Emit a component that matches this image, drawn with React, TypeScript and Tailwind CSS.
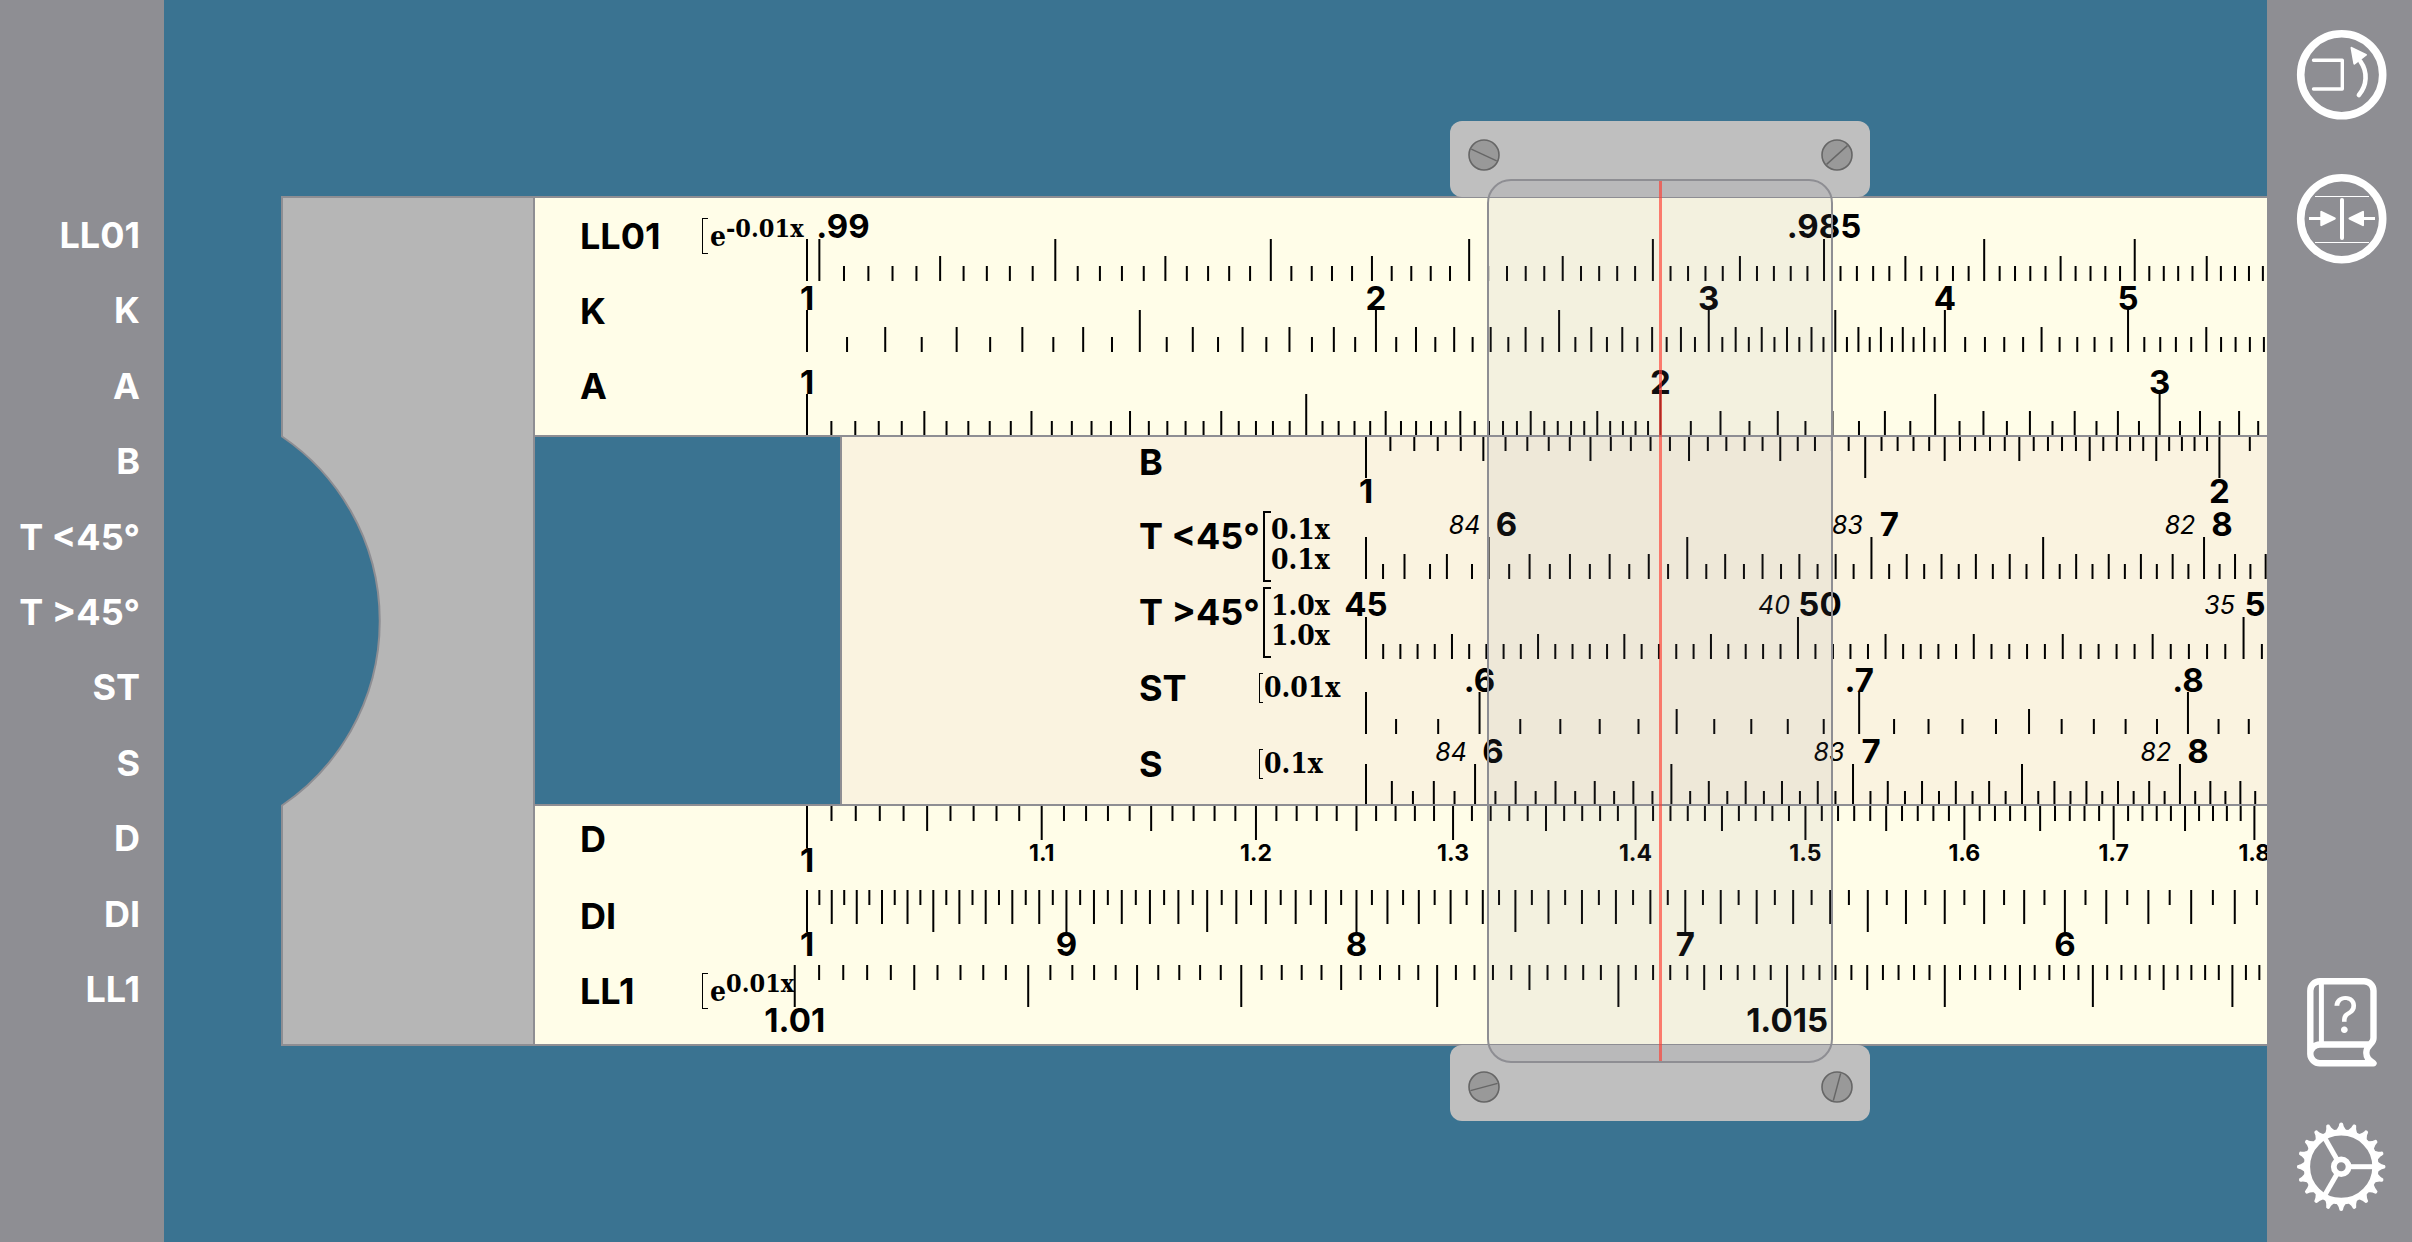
import React from "react";

/* ---------- scale geometry ---------- */

const LENGTH = 5670; // pixels in one full decade of the D scale
const LONG = 42;
const TALL = 34;
const MID = 25;
const SHORT = 15;

type Tick = { x: number; len: number };
type Numeral = { x: number; y: number; text: string; kind?: "small" | "italic" };

const log = Math.log10;
const rad = (deg: number) => (deg * Math.PI) / 180;

const position = {
  K: (v: number) => (LENGTH / 3) * log(v),
  A: (v: number) => (LENGTH / 2) * log(v),
  D: (v: number) => LENGTH * log(v),
  DI: (v: number) => LENGTH * (1 - log(v)),
  LL01: (v: number) => LENGTH * log(-Math.log(v) * 100),
  LL1: (v: number) => LENGTH * log(Math.log(v) * 100),
  S: (v: number) => LENGTH * log(10 * Math.sin(rad(v))),
  T: (v: number) => LENGTH * log(10 * Math.tan(rad(v))),
  T2: (v: number) => LENGTH * log(Math.tan(rad(v))),
  ST: (v: number) => LENGTH * log(100 * rad(v)),
};

function ticks(
  at: (v: number) => number,
  from: number,
  to: number,
  perUnit: number,
  len: (n: number) => number,
): Tick[] {
  const out: Tick[] = [];
  for (let n = from; n <= to; n++) out.push({ x: at(n / perUnit), len: len(n) });
  return out;
}

const every = (major: number, mid: number) => (n: number) =>
  n % major === 0 ? LONG : n % mid === 0 ? MID : SHORT;

const start: Tick = { x: 0, len: LONG };

const ll01Ticks = [start, ...ticks(position.LL01, 9800, 9900, 10000, every(10, 5))];
const kTicks = [
  ...ticks(position.K, 20, 80, 20, every(10, 2)),
  ...ticks(position.K, 41, 100, 10, every(10, 5)),
];
const aTicks = [
  ...ticks(position.A, 50, 100, 50, every(25, 5)),
  ...ticks(position.A, 41, 100, 20, every(10, 2)),
];
const tLowTicks = [
  start,
  { x: position.T(5.75), len: SHORT },
  { x: position.T(5.8), len: MID },
  { x: position.T(5.86), len: SHORT },
  { x: position.T(5.9), len: MID },
  { x: position.T(5.96), len: SHORT },
  ...ticks(position.T, 120, 200, 20, every(10, 2)),
];
const tHighTicks = ticks(position.T2, 225, 300, 5, every(25, 5));
const stTicks = [start, ...ticks(position.ST, 58, 100, 100, every(10, 5))];
const sTicks = [start, ...ticks(position.S, 116, 200, 20, every(10, 2))];
const dTicks = ticks(position.D, 100, 200, 100, (n) =>
  n % 100 === 0 ? LONG : n % 10 === 0 ? TALL : n % 5 === 0 ? MID : SHORT,
);
const diTicks = ticks(position.DI, 100, 200, 20, (n) =>
  n % 10 === 0 ? LONG : n % 2 === 0 ? TALL : SHORT,
);
const ll1Ticks = ticks(position.LL1, 10100, 10200, 10000, (n) =>
  n % 10 === 0 ? LONG : n % 5 === 0 ? MID : SHORT,
);

function Ticks({ marks, y, up }: { marks: Tick[]; y: number; up?: boolean }) {
  const d = marks.map((m) => `M${m.x.toFixed(2)} ${y}v${up ? -m.len : m.len}`).join("");
  return <path d={d} stroke="#000" strokeWidth={2} fill="none" />;
}

const numeralClass = {
  big: "text-[33px] font-bold",
  small: "text-[23px] font-bold",
  italic: "text-[25px] font-normal italic",
};

function Numerals({ items }: { items: Numeral[] }) {
  return (
    <>
      {items.map((n) => (
        <text
          key={`${n.x}-${n.y}-${n.text}`}
          x={n.x}
          y={n.y}
          textAnchor="middle"
          className={numeralClass[n.kind ?? "big"]}
        >
          {n.text}
        </text>
      ))}
    </>
  );
}

const row = (at: (v: number) => number, y: number, values: number[], show = (v: number) => String(v)) =>
  values.map((v): Numeral => ({ x: at(v), y, text: show(v) }));

/* A degree scale carries the angle to the right of its tick and the complement to the left. */
const angleRow = (at: (v: number) => number, y: number, values: number[], shift: number) =>
  values.flatMap((v): Numeral[] => [
    { x: at(v) + shift, y, text: String(v) },
    { x: at(v) - 24, y: y - 2, text: String(90 - v), kind: "italic" },
  ]);

const noZero = (v: number) => String(v).replace(/^0/, "");

/* ---------- names and formulas ---------- */

const names = ["LL01", "K", "A", "B", "T <45°", "T >45°", "ST", "S", "D", "DI", "LL1"];

function Name({ children, wide }: { children: React.ReactNode; wide?: boolean }) {
  return (
    <span className={wide ? "w-[120px] shrink-0 whitespace-pre" : "w-[122px] shrink-0"}>{children}</span>
  );
}

const serif = "font-['DejaVu_Serif_Condensed','DejaVu_Serif',serif] font-bold";

function Power({ exponent }: { exponent: string }) {
  return (
    <span className={`${serif} flex items-start text-[28px] leading-9`}>
      <span className="mt-[2px] h-9 w-[6px] border-y border-l border-black" />
      <span className="pl-[2px] pt-[3px]">e</span>
      <span className="text-[25px] leading-[26px]">{exponent}</span>
    </span>
  );
}

function Factor({ children }: { children: string }) {
  return (
    <span className={`${serif} flex items-center text-[28px] leading-[30px]`}>
      <span className="h-[30px] w-1 border-y border-l border-black" />
      <span className="pl-px">{children}</span>
    </span>
  );
}

function DoubleFactor({ children }: { children: string }) {
  return (
    <span className={`${serif} ml-1 flex items-stretch pt-5 text-[28px] leading-[30px]`}>
      <span className="h-[71px] w-2 border-y-2 border-l-2 border-black" />
      <span className="flex flex-col pt-1">
        <span>{children}</span>
        <span>{children}</span>
      </span>
    </span>
  );
}

/* ---------- parts of the rule ---------- */

function Chart({ origin, children }: { origin: number; children: React.ReactNode }) {
  return (
    <svg className="absolute inset-0 h-full w-full overflow-hidden" aria-hidden="true">
      <g transform={`translate(${origin} 0)`}>{children}</g>
    </svg>
  );
}

function UpperStator() {
  return (
    <section className="relative h-[241px] overflow-hidden border-y-2 border-[#8e8e93] bg-[#fffde8] pl-[45px] text-4xl font-bold">
      <div className="flex h-[75px] items-center">
        <Name>LL01</Name>
        <Power exponent="-0.01x" />
      </div>
      <div className="flex h-[75px] items-center">
        <Name>K</Name>
      </div>
      <div className="flex h-[75px] items-center">
        <Name>A</Name>
      </div>
      <Chart origin={272}>
        <Ticks marks={ll01Ticks} y={83} up />
        <Ticks marks={kTicks} y={154} up />
        <Ticks marks={aTicks} y={238} up />
        <Numerals
          items={[
            { x: 36, y: 40, text: ".99" },
            ...row(position.LL01, 40, [0.985], noZero),
            ...row(position.K, 112, [1, 2, 3, 4, 5, 6]),
            ...row(position.A, 196, [1, 2, 3]),
          ]}
        />
      </Chart>
    </section>
  );
}

function Slide() {
  return (
    <section className="relative ml-[305px] h-[367px] overflow-hidden border-l-2 border-[#8e8e93] bg-[#faf3e0] pl-[297px] text-4xl font-bold">
      <div className="flex h-[61px] items-center pb-[11px]">
        <Name wide>B</Name>
      </div>
      <div className="flex h-[76px] items-center">
        <Name wide>{"T <45°"}</Name>
        <DoubleFactor>0.1x</DoubleFactor>
      </div>
      <div className="flex h-[76px] items-center">
        <Name wide>{"T >45°"}</Name>
        <DoubleFactor>1.0x</DoubleFactor>
      </div>
      <div className="flex h-[76px] items-center">
        <Name wide>ST</Name>
        <Factor>0.01x</Factor>
      </div>
      <div className="flex h-[76px] items-center">
        <Name wide>S</Name>
        <Factor>0.1x</Factor>
      </div>
      <Chart origin={524}>
        <Ticks marks={aTicks} y={-1} />
        <Ticks marks={tLowTicks} y={142} up />
        <Ticks marks={tHighTicks} y={222} up />
        <Ticks marks={stTicks} y={297} up />
        <Ticks marks={sTicks} y={369} up />
        <Numerals
          items={[
            ...row(position.A, 66, [1, 2]),
            ...angleRow(position.T, 99, [6, 7, 8], 18),
            { x: 0, y: 179, text: "45" },
            ...angleRow(position.T2, 179, [50, 55], 22),
            ...row(position.ST, 255, [0.6, 0.7, 0.8], noZero),
            ...angleRow(position.S, 326, [6, 7, 8], 18),
          ]}
        />
      </Chart>
    </section>
  );
}

function LowerStator() {
  return (
    <section className="relative h-[242px] overflow-hidden border-y-2 border-[#8e8e93] bg-[#fffde8] pl-[45px] text-4xl font-bold">
      <div className="flex h-[72px] items-center pb-[6px]">
        <Name>D</Name>
      </div>
      <div className="flex h-[75px] items-center">
        <Name>DI</Name>
      </div>
      <div className="flex h-[75px] items-center">
        <Name>LL1</Name>
        <Power exponent="0.01x" />
      </div>
      <Chart origin={272}>
        <Ticks marks={dTicks} y={0} />
        <Ticks marks={diTicks} y={84} />
        <Ticks marks={ll1Ticks} y={159} />
        <Numerals
          items={[
            { x: 0, y: 66, text: "1" },
            ...[1.1, 1.2, 1.3, 1.4, 1.5, 1.6, 1.7, 1.8, 1.9].map(
              (v): Numeral => ({ x: position.D(v), y: 55, text: String(v), kind: "small" }),
            ),
            { x: 0, y: 150, text: "1" },
            ...row(position.DI, 150, [9, 8, 7, 6]),
            ...row(position.LL1, 226, [1.01, 1.015]),
          ]}
        />
      </Chart>
    </section>
  );
}

function EndBracket() {
  return (
    <svg className="h-[850px] w-[254px] shrink-0" viewBox="0 0 254 850" aria-hidden="true">
      <path
        d="M1 1H253V849H1V609.500A223 223 0 0 0 1 240.500Z"
        fill="#b6b6b6"
        stroke="#8e8e93"
        strokeWidth={2}
      />
    </svg>
  );
}

function Screw({ angle }: { angle: number }) {
  return (
    <svg className="h-8 w-8" viewBox="-16 -16 32 32" aria-hidden="true">
      <circle r={15} fill="#999" stroke="#666" strokeWidth={1.6} />
      <path d="M-14 0H14" stroke="#666" strokeWidth={1.4} transform={`rotate(${angle})`} />
    </svg>
  );
}

function Handle({ angles, below }: { angles: [number, number]; below?: boolean }) {
  return (
    <div
      className={
        below
          ? "flex h-[76px] items-center justify-between rounded-xl bg-[#bfbfbf] pl-[18px] pr-[17px] pt-2"
          : "flex h-[76px] items-center justify-between rounded-xl bg-[#bfbfbf] pb-2 pl-[18px] pr-[17px]"
      }
    >
      <Screw angle={angles[0]} />
      <Screw angle={angles[1]} />
    </div>
  );
}

function Cursor() {
  return (
    <div className="absolute inset-y-0 left-[1286px] flex w-[420px] items-center">
      <div className="relative flex h-[1000px] w-full flex-col justify-between">
        <Handle angles={[25, -42]} />
        <Handle angles={[-15, -75]} below />
        <div className="absolute inset-x-[37px] inset-y-[58px] flex justify-center rounded-3xl border-2 border-[#8e8e93] bg-[#8e8e93]/10">
          <div className="w-[3px] bg-[#ff3b30]/65" />
        </div>
      </div>
    </div>
  );
}

/* ---------- side buttons ---------- */

function IconButton({ label, children }: { label: string; children: React.ReactNode }) {
  return (
    <button type="button" aria-label={label} className="h-[90px] w-[90px] cursor-pointer">
      <svg
        className="h-full w-full overflow-visible"
        viewBox="0 0 90 90"
        fill="none"
        stroke="#fff"
        strokeLinecap="round"
        strokeLinejoin="round"
      >
        {children}
      </svg>
    </button>
  );
}

function FlipIcon() {
  return (
    <>
      <circle cx={44.7} cy={44.7} r={41} strokeWidth={7.6} />
      <path d="M16.500 30.300H45.300V59H16.500" strokeWidth={3.4} />
      <path d="M61.900 65C70 55.500 71 42 63.500 31.500" strokeWidth={4.6} />
      <path d="M54.500 17.800L69 24.800L57.300 33.700Z" fill="#fff" strokeWidth={2} />
    </>
  );
}

function CenterIcon() {
  return (
    <>
      <circle cx={44.7} cy={44.7} r={41} strokeWidth={7.6} />
      <path d="M18 22.500H72M18 68.500H72" strokeWidth={1.2} strokeLinecap="butt" />
      <path d="M45 26V64" strokeWidth={4} />
      <path d="M12 44.500H26M78 44.500H64" strokeWidth={3.2} strokeLinecap="butt" />
      <path
        d="M24.300 37.800V51.200L37.800 44.500ZM66 37.800V51.200L52.500 44.500Z"
        fill="#fff"
        strokeWidth={2}
      />
    </>
  );
}

function BookIcon() {
  return (
    <>
      <path
        d="M13.300 76V12.800A9.500 9.500 0 0 1 22.800 3.300H67A9.500 9.500 0 0 1 76.500 12.800V60C76.500 63 75.500 64.200 73.500 66C68.500 71 68.500 76.500 71 80.500C72.500 83 74.500 83.500 76.500 85.300H23A9.600 9.600 0 0 1 13.300 76A9.600 9.600 0 0 1 23 66.500H72"
        strokeWidth={6.4}
      />
      <path d="M24.400 4V66" strokeWidth={5} strokeLinecap="butt" />
      <text
        x={48.500}
        y={55}
        textAnchor="middle"
        fill="#fff"
        stroke="none"
        className="text-[51px] font-normal"
      >
        ?
      </text>
    </>
  );
}

function GearIcon() {
  const teeth = Array.from({ length: 20 }, (_, i) => i * 18);
  return (
    <g transform="translate(44.200 44.700)">
      <circle r={34.3} strokeWidth={6.4} />
      {teeth.map((a) => (
        <path
          key={a}
          d="M35.500 -4.500C38 -3.500 39 -1.500 42.300 -1.200A1.200 1.200 0 0 1 42.300 1.200C39 1.500 38 3.500 35.500 4.500Z"
          fill="#fff"
          strokeWidth={1.6}
          transform={`rotate(${a})`}
        />
      ))}
      <circle r={7.4} strokeWidth={5.8} />
      {[0, 120, 240].map((a) => (
        <path key={a} d="M9 0H33" strokeWidth={5} strokeLinecap="butt" transform={`rotate(${a})`} />
      ))}
    </g>
  );
}

export default function App() {
  return (
    <div className="flex h-screen overflow-hidden bg-[#3a7391] font-['Inter','Liberation_Sans',sans-serif] text-black">
      <aside className="flex w-[164px] shrink-0 items-center bg-[#8e8e93]">
        <div className="h-[848px] w-full">
          <ul className="grid h-[830px] grid-rows-11 pr-6 text-right text-4xl font-bold text-white">
            {names.map((name) => (
              <li key={name} className="flex items-center justify-end whitespace-pre">
                {name}
              </li>
            ))}
          </ul>
        </div>
      </aside>

      <main className="relative flex min-w-0 flex-1 items-center overflow-hidden pl-[117px]">
        <EndBracket />
        <div className="min-w-0 flex-1">
          <UpperStator />
          <Slide />
          <LowerStator />
        </div>
        <Cursor />
      </main>

      <aside className="flex w-[145px] shrink-0 flex-col items-center justify-between bg-[#8e8e93] py-[30px] pl-1">
        <div className="flex flex-col gap-[54px]">
          <IconButton label="Flip rule">
            <FlipIcon />
          </IconButton>
          <IconButton label="Center cursor">
            <CenterIcon />
          </IconButton>
        </div>
        <div className="flex flex-col gap-[54px]">
          <IconButton label="Help">
            <BookIcon />
          </IconButton>
          <IconButton label="Settings">
            <GearIcon />
          </IconButton>
        </div>
      </aside>
    </div>
  );
}
